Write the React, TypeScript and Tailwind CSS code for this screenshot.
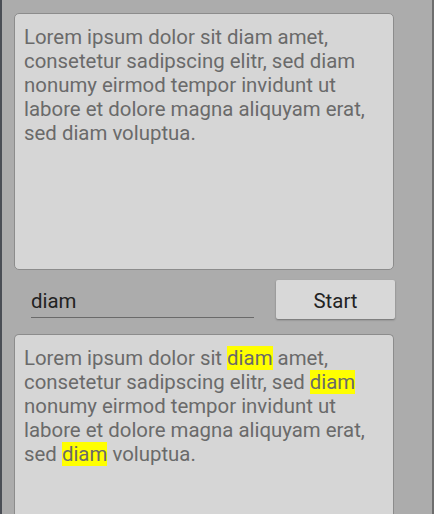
import React from "react";

const TEXT =
  "Lorem ipsum dolor sit diam amet, consetetur sadipscing elitr, sed diam nonumy eirmod tempor invidunt ut labore et dolore magna aliquyam erat, sed diam voluptua.";

function Highlighted({ text, term }: { text: string; term: string }) {
  const parts = text.split(new RegExp(`(${term})`, "g"));
  return (
    <>
      {parts.map((p, i) =>
        p === term ? (
          <span key={i} className="bg-[#ffff00]">
            {p}
          </span>
        ) : (
          <React.Fragment key={i}>{p}</React.Fragment>
        )
      )}
    </>
  );
}

export default function App() {
  const term = "diam";
  return (
    <div
      className="w-[434px] h-[514px] overflow-hidden bg-[#acacac] border-l-2 border-l-[#4a4e55] border-r-2 border-r-[#6e6e6e] flex flex-col pl-3 pr-[38px] pt-[13px] gap-[10px]"
      style={{ fontFamily: "Roboto, 'Noto Sans', sans-serif" }}
    >
      <div className="h-[257px] shrink-0 bg-[#d6d6d6] border border-[#8c8c8c] rounded-[5px] px-[9px] pt-[11px] text-[20.4px] leading-[24px] text-[#6a6a6a]">
        {TEXT}
      </div>

      <div className="flex items-center h-[39px] shrink-0">
        <div className="ml-[17px] w-[223px] h-[36px] border-b border-[#6a6a6a] flex items-end pb-[4px] text-[20.4px] leading-[24px] text-[#222]">
          {term}
        </div>
        <button
          type="button"
          className="ml-auto -mr-px w-[119px] h-[39px] pt-[3px] bg-[#d8d8d8] rounded-[2px] shadow-[0_1px_2px_rgba(0,0,0,0.35)] text-[20.4px] leading-[24px] text-[#222]"
        >
          Start
        </button>
      </div>

      <div className="mt-[5px] flex-1 bg-[#d6d6d6] border border-[#8c8c8c] border-b-0 rounded-t-[5px] px-[9px] pt-[11px] text-[20.4px] leading-[24px] text-[#6a6a6a]">
        <Highlighted text={TEXT} term={term} />
      </div>
    </div>
  );
}
